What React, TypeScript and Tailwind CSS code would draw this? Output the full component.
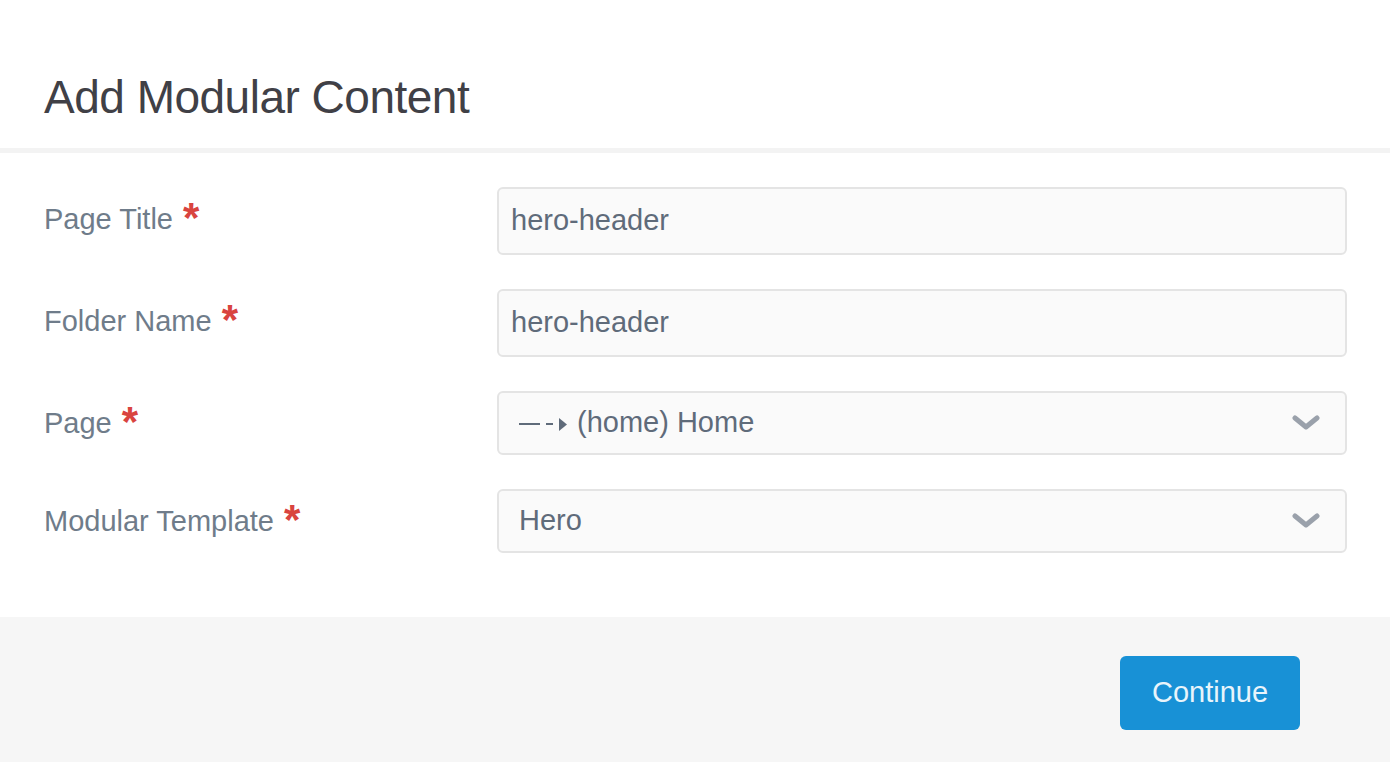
// form rows for the modal
const FIELDS = [
  { label: 'Page Title', value: 'hero-header', type: 'input' },
  { label: 'Folder Name', value: 'hero-header', type: 'input' },
  { label: 'Page', value: '(home) Home', type: 'select', prefix: true },
  { label: 'Modular Template', value: 'Hero', type: 'select' },
];

function Chevron() {
  return (
    <svg width="28" height="16" viewBox="0 0 28 16" className="text-[#9aa1ab]">
      <polyline points="3,3 14,12 25,3" fill="none" stroke="currentColor" strokeWidth="5" strokeLinecap="round" strokeLinejoin="round" />
    </svg>
  );
}

function Field({ label, value, type, prefix }: { label: string; value: string; type: string; prefix?: boolean }) {
  const isSelect = type === 'select';
  return (
    <div className="flex items-start">
      <div className="w-[453px] flex items-start text-[29px] text-[#6f7c8a] pt-[11px]">
        <span>{label}</span>
        <span className="ml-[10px] text-[42px] font-bold leading-none text-[#d9443f] -mt-[1px]">*</span>
      </div>
      <div
        className={`flex-1 flex items-center bg-[#fafafa] border-2 border-[#e4e4e4] rounded-[6px] text-[29px] text-[#5f6b7a] ${
          isSelect ? 'h-[64px] pl-[20px] pr-[25px]' : 'h-[68px] pl-[12px]'
        }`}
      >
        {prefix && (
          <span className="flex items-center mr-[10px] pt-[2px]">
            <span className="w-[21px] h-[2px] bg-[#5f6b7a]" />
            <span className="ml-[6px] w-[7px] h-[2px] bg-[#5f6b7a]" />
            <svg width="8" height="13" viewBox="0 0 8 13" className="ml-[6px]">
              <polygon points="0,0 8,6.5 0,13" fill="#5f6b7a" />
            </svg>
          </span>
        )}
        <span className="flex-1">{value}</span>
        {isSelect && <Chevron />}
      </div>
    </div>
  );
}

function App() {
  return (
    <div
      className="w-[1390px] h-[762px] bg-white flex flex-col overflow-hidden"
      style={{ fontFamily: '"Liberation Sans", Arial, sans-serif' }}
    >
      {/* 헤더 */}
      <div className="h-[148px] px-[44px] pt-[68px]">
        <h1 className="text-[46px] leading-[58px] text-[#404046] tracking-[-0.5px]">Add Modular Content</h1>
      </div>
      <div className="h-[5px] bg-[#f3f3f3]" />

      {/* 폼 */}
      <div className="flex-1 pl-[44px] pr-[43px] pt-[34px] flex flex-col gap-[34px]">
        {FIELDS.map((f) => (
          <Field key={f.label} {...f} />
        ))}
      </div>

      {/* 푸터 */}
      <div className="h-[145px] bg-[#f6f6f6] flex justify-end items-start pt-[39px] pr-[90px]">
        <button className="w-[180px] h-[74px] bg-[#1891d6] rounded-[6px] text-[29px] text-[#e8f4fb]">Continue</button>
      </div>
    </div>
  );
}

export default App;
